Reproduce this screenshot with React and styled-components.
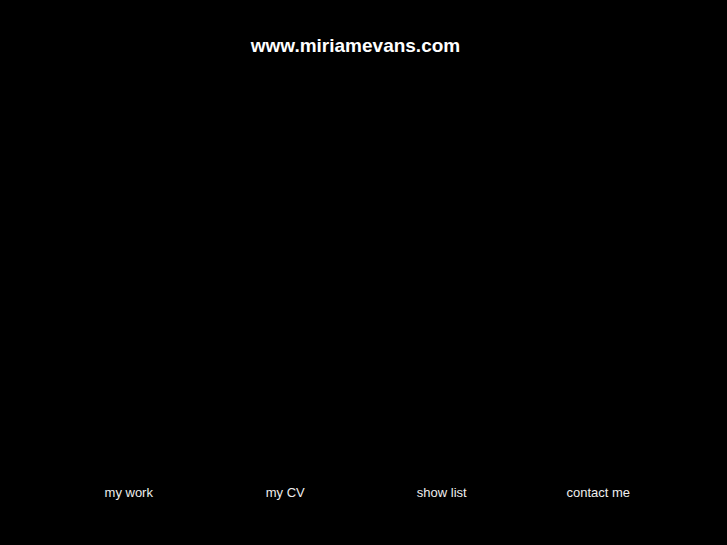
import React from 'react'
import styled, { createGlobalStyle } from 'styled-components';

const Global = createGlobalStyle`
    html, body {
        margin : 0;
        padding : 0;
        background-color : #000;
    }
    body {
        font-family : "Liberation Sans", Arial, sans-serif;
    }
`;

const Page = styled.div`
    width : 727px;
    height : 545px;
    display : flex;
    flex-direction : column;
    background-color : #000;
    color : #fff;
`;

const Title = styled.h1`
    margin : 35px 0 0 0;
    padding-right : 16px;
    font-size : 19px;
    line-height : 22px;
    font-weight : bold;
    text-align : center;
    color : #fff;
`;

const Stage = styled.div`
    height : 428px;
`;

const Nav = styled.nav`
    display : grid;
    grid-template-columns : repeat(4, 156.5px);
    justify-content : center;
    & a {
        font-size : 13px;
        line-height : 15px;
        color : #eee;
        text-decoration : none;
        text-align : center;
    }
`;

const links = ['my work', 'my CV', 'show list', 'contact me'];

const App = () => {
    return (
        <Page>
            <Global />
            <Title>www.miriamevans.com</Title>
            <Stage />
            <Nav>
                {links.map((l) => <a key={l} href='#'>{l}</a>)}
            </Nav>
        </Page>
    )
}

export default App
